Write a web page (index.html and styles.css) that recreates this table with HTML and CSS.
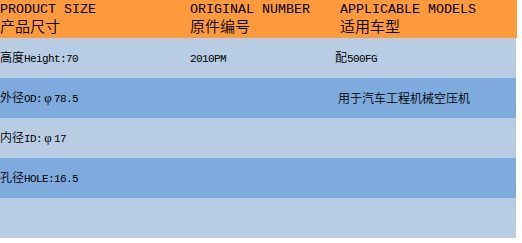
FILE: index.html
```html
<!DOCTYPE html>
<html>
<head>
<meta charset="utf-8">
<link rel="stylesheet" href="styles.css">
</head>
<body>
<div class="table">
  <div class="row head">
    <div class="cell"><div class="en-h">PRODUCT SIZE</div><div class="zh-h">产品尺寸</div></div>
    <div class="cell"><div class="en-h">ORIGINAL NUMBER</div><div class="zh-h">原件编号</div></div>
    <div class="cell c3h"><div class="en-h">APPLICABLE MODELS</div><div class="zh-h">适用车型</div></div>
  </div>
  <div class="row light">
    <div class="cell">高度<span class="en">Height:70</span></div>
    <div class="cell"><span class="en">2010PM</span></div>
    <div class="cell">配<span class="en">500FG</span></div>
  </div>
  <div class="row dark">
    <div class="cell">外径<span class="en">OD:</span><span class="phi">φ</span><span class="en">78.5</span></div>
    <div class="cell"></div>
    <div class="cell c3">用于汽车工程机械空压机</div>
  </div>
  <div class="row light">
    <div class="cell">内径<span class="en">ID:</span><span class="phi">φ</span><span class="en">17</span></div>
    <div class="cell"></div>
    <div class="cell"></div>
  </div>
  <div class="row dark">
    <div class="cell">孔径<span class="en">HOLE:16.5</span></div>
    <div class="cell"></div>
    <div class="cell"></div>
  </div>
  <div class="row light">
    <div class="cell"></div>
    <div class="cell"></div>
    <div class="cell"></div>
  </div>
</div>
</body>
</html>
```

FILE: styles.css
```css
html, body {
  margin: 0;
  padding: 0;
  background: #ffffff;
}
.table {
  width: 516px;
  font-family: "Noto Sans CJK SC", sans-serif;
  font-weight: 350;
  color: #000;
}
.row {
  display: grid;
  grid-template-columns: 190px 145px 181px;
  height: 40px;
  align-items: center;
  font-size: 12px;
  line-height: 14px;
}
.row.head {
  height: 38px;
  width: 517px;
  align-items: start;
  background: #fe9a3b;
}
.row.light { background: #b8cce4; }
.row.dark { background: #7eaade; }
.cell {
  white-space: nowrap;
}
.c3 { padding-left: 3px; }
.c3h { padding-left: 5px; }
.en {
  font-family: "Liberation Mono", monospace;
  font-weight: 400;
  font-size: 11px;
  letter-spacing: -0.6px;
}
.phi {
  display: inline-block;
  width: 12px;
  text-align: center;
  font-family: "Liberation Serif", serif;
  font-weight: 400;
  font-size: 13px;
}
.en-h {
  font-family: "Liberation Mono", monospace;
  font-weight: 400;
  font-size: 13.33px;
  line-height: 14px;
  margin-top: 3px;
}
.zh-h {
  font-size: 15px;
  line-height: 18px;
}
```
